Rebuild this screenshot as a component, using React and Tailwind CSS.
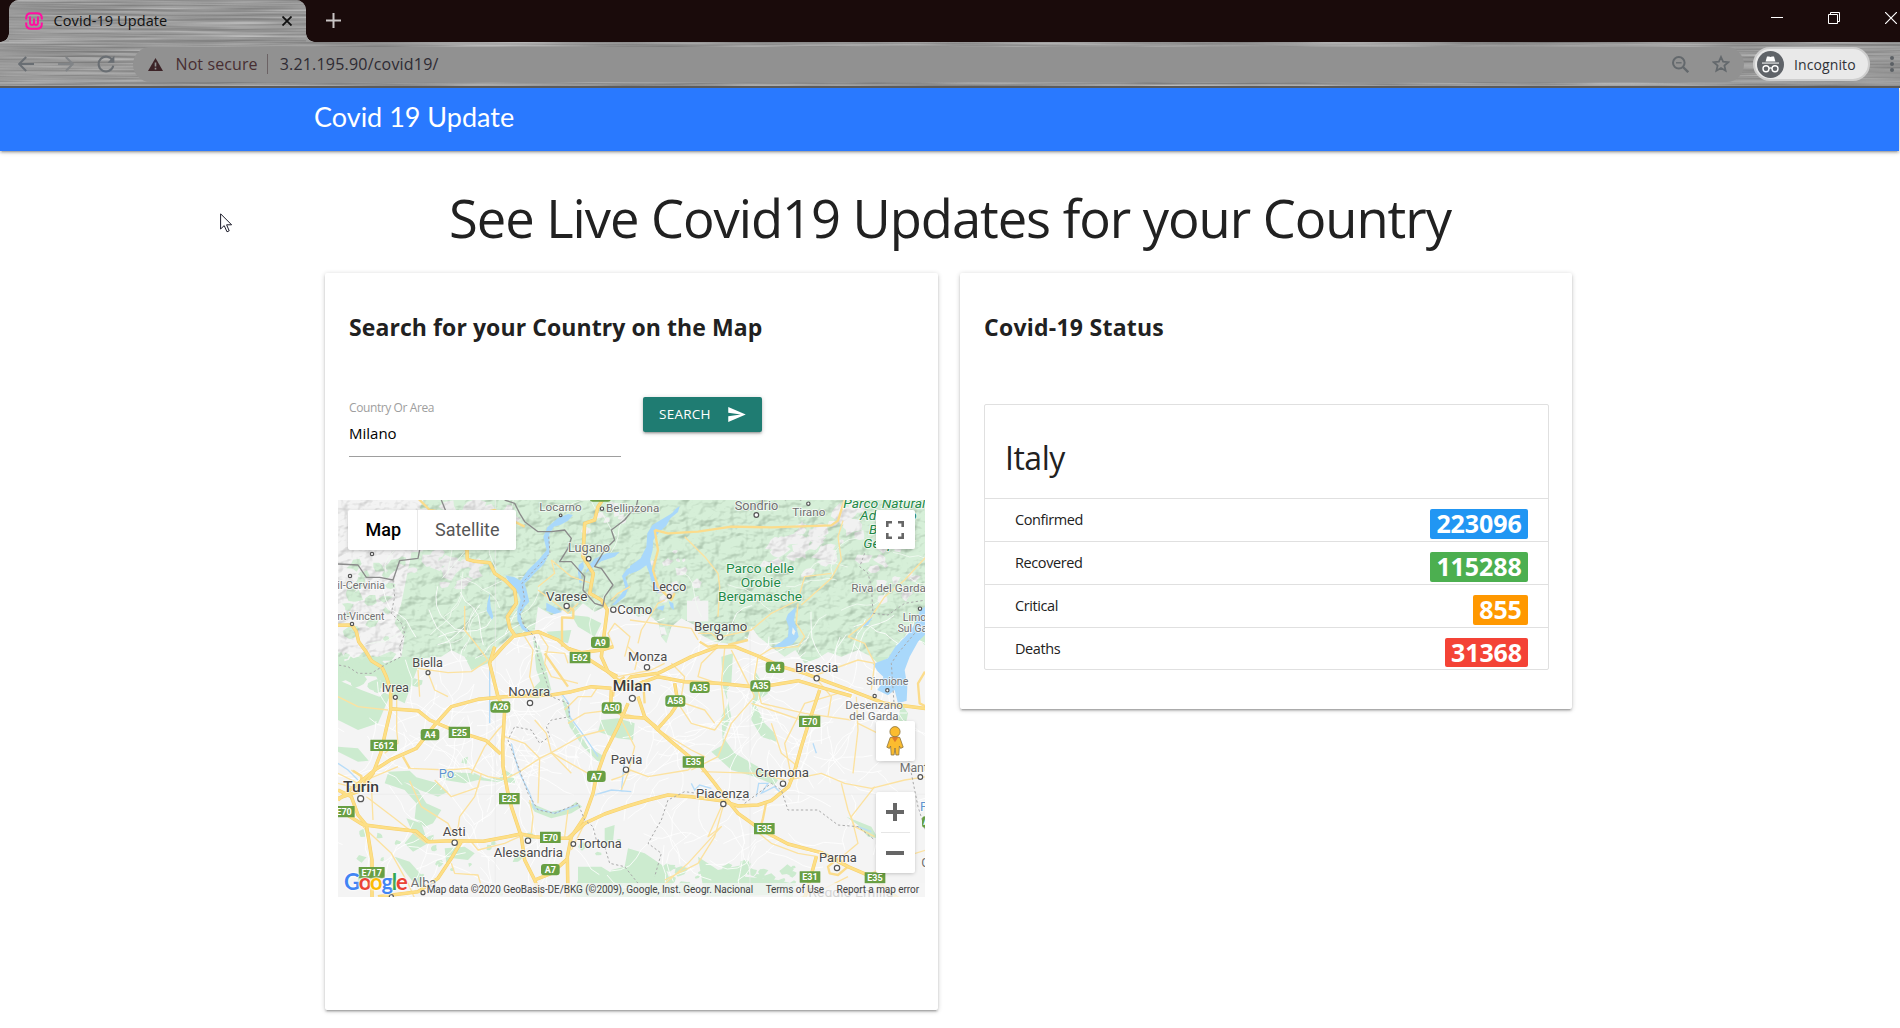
import React from "react";

const UI = "font-['Open_Sans',sans-serif]";

/* ---------- map data (three units per screen pixel) ---------- */

function rng(seed) {
  let s = seed;
  return () => {
    s = (s * 1664525 + 1013904223) % 4294967296;
    return s / 4294967296;
  };
}

function blob(r, x, y, size, skew) {
  const n = 6 + Math.floor(r() * 4);
  let d = "";
  for (let i = 0; i < n; i++) {
    const a = (i / n) * Math.PI * 2;
    const q = size * (0.45 + r() * 0.75);
    d += `${i ? "L" : "M"}${(x + Math.cos(a) * q * skew + Math.sin(a) * q * 0.3).toFixed(0)} ${(y + Math.sin(a) * q - Math.cos(a) * q * 0.4).toFixed(0)}`;
  }
  return d + "Z";
}

function blobs(seed, count, x0, y0, x1, y1, smin, smax, skew = 1.3) {
  const r = rng(seed);
  let d = "";
  for (let i = 0; i < count; i++) {
    d += blob(r, x0 + r() * (x1 - x0), y0 + r() * (y1 - y0), smin + r() * (smax - smin), skew);
  }
  return d;
}

function web(seed, count, x0, y0, x1, y1, step) {
  const r = rng(seed);
  let d = "";
  for (let i = 0; i < count; i++) {
    let x = x0 + r() * (x1 - x0);
    let y = y0 + r() * (y1 - y0);
    let a = r() * 6.28;
    d += `M${x.toFixed(0)} ${y.toFixed(0)}`;
    for (let k = 0; k < 6; k++) {
      a += (r() - 0.5) * 1.1;
      x += Math.cos(a) * step;
      y += Math.sin(a) * step;
      d += `L${x.toFixed(0)} ${y.toFixed(0)}`;
    }
  }
  return d;
}

const GREEN_NORTH =
  "M250 20 L1770 20 L1770 345 L1735 380 L1700 440 L1650 505 L1620 520 L1596 498 L1560 480 L1510 500 L1470 486 L1440 505 L1400 520 L1372 480 L1340 500 L1300 470 L1262 440 L1240 410 L1225 455 L1180 462 L1130 455 L1090 435 L1070 405 L1030 385 L1000 410 L985 460 L970 440 L962 400 L930 372 L900 380 L860 350 L800 350 L770 365 L735 340 L700 375 L675 360 L640 375 L600 350 L590 420 L560 440 L530 430 L500 455 L470 480 L450 520 L400 540 L380 500 L340 480 L310 500 L250 505 L225 570 L200 640 L160 620 L120 560 L60 555 L0 580 L0 520 L60 500 L100 490 L140 520 L190 500 L200 440 L170 400 L190 340 L160 290 L215 215 Z";

const GREENS = [
  "M0 570L70 600L150 630L120 700L60 720L0 690Z",
  "M0 770L60 775L92 812L60 815L0 785Z",
  "M150 845L215 842L235 862L300 880L330 905L300 920L245 900L210 880L165 870Z",
  "M150 850L240 900L265 940L310 960L285 1000L260 1010L230 985L235 940L200 900L140 880Z",
  "M310 845L410 850L440 865L535 862L530 878L470 875L420 870L380 880L320 870Z",
  "M375 805L390 800L386 822L370 818Z",
  "M205 985L250 1000L270 1060L225 1085L200 1060L225 1030Z",
  "M320 1075L380 1070L410 1090L390 1110L345 1105L325 1120Z",
  "M170 1100L215 1115L255 1160L240 1195L205 1150Z",
  "M570 935L640 965L690 955L715 935L732 950L700 970L640 985L590 965Z",
  "M670 615L690 650L700 690L750 770L800 800L790 825L735 770L695 710L680 660Z",
  "M790 690L840 685L890 700L885 750L840 745L780 725Z",
  "M1150 500L1185 490L1180 580L1165 610L1180 680L1155 740L1190 790L1260 830L1320 870L1310 885L1250 860L1180 840L1120 785L1155 765L1150 680L1170 640L1155 590Z",
  "M1250 540L1290 610L1250 640L1280 700L1310 730L1316 755L1270 740L1240 690L1245 620Z",
  "M1690 640L1710 670L1700 720L1680 690Z",
  "M1730 380L1765 350L1765 470L1725 430Z",
  "M1525 980L1600 1010L1620 1045L1590 1040L1560 1005Z",
  "M870 1075L920 1090L980 1130L1000 1180L1010 1225L850 1225L800 1180L820 1140L860 1130Z",
  "M720 1130L790 1130L870 1180L860 1225L700 1225L720 1170Z",
  "M1080 1100L1140 1140L1240 1120L1220 1160L1320 1170L1380 1185L1300 1215L1100 1220Z",
  "M800 1015L830 1005L825 1055L800 1070Z",
  "M500 840L535 860L520 880L480 870Z",
  "M560 620L590 590L620 560L640 600L600 625Z",
  "M585 440L605 470L625 540L640 600L620 610L595 540Z",
  "M625 425L700 420L690 460L650 450Z",
  "M700 375L750 380L790 400L770 440L720 410Z",
];

const LAKES = [
  "M705 75L690 92L668 104L648 110L634 132L634 190L618 222L590 250L572 270L560 280L568 310L574 335L560 350L548 372L552 400L570 420L590 425L575 432L552 418L538 390L538 358L548 330L540 308L520 290L502 256L530 262L548 272L570 240L606 205L626 180L616 140L628 112L660 84L690 72Z",
  "M455 310L448 340L446 362L462 390L466 380L458 350Z",
  "M625 338L648 350L672 366L650 372L625 362Z",
  "M845 186L806 190L770 206L752 228L742 250L760 236L790 214L830 200Z",
  "M735 215L722 225L720 250L725 280L732 276L728 250L738 230Z",
  "M900 222L866 238L852 258L862 292L850 312L822 346L832 344L862 318L872 292L862 262L876 250L900 242Z",
  "M1025 48L1012 58L1002 70L972 88L944 104L928 130L925 170L908 205L876 228L876 252L905 240L925 226L934 250L946 290L960 310L965 302L948 262L936 210L944 180L946 150L962 128L984 108L998 84L1020 66Z",
  "M960 350L980 346L975 362L958 356ZM992 334L1006 340L1008 360L998 352Z",
  "M1375 350L1350 372L1344 388L1352 410L1350 440L1330 455L1305 470L1340 472L1365 462L1382 440L1376 415L1368 390Z",
  "M1604 362L1596 380L1582 400L1572 412L1590 404L1602 384Z",
  "M1765 348L1746 360L1735 395L1712 430L1672 470L1650 505L1605 522L1620 545L1636 560L1628 585L1618 600L1650 616L1670 600L1680 640L1706 632L1708 590L1700 540L1715 500L1740 455L1765 430Z",
];

const MAJOR = [
  "M0 406L42 405L55 425L62 455L82 482L100 512L132 532L145 560L158 600L158 660L145 715L128 790L105 850L60 905L0 925",
  "M0 900L40 920L60 975L85 1005L102 1110L102 1225",
  "M20 970L75 1004L150 1014L235 1024L270 1055L340 1052L436 1054L500 1042L548 1032L590 1040L640 1045L690 1045L740 1000L800 972L870 948L930 930L990 915L1060 920L1150 932L1200 948L1260 945L1300 932L1352 890L1368 850L1390 770L1415 690L1445 600",
  "M0 930L110 840L160 808L235 775L290 705L340 650L420 628L500 620L640 615L700 605L760 590L820 595",
  "M158 656L240 662L275 690L350 722L445 752L488 792",
  "M470 470L455 520L470 580L480 620L500 660L494 760L495 830L508 900L520 950L540 1010L550 1040L560 1110L590 1170L610 1225",
  "M387 180L388 208L410 214L455 218L470 250L500 270L530 300L535 340L508 380L516 415L530 435L500 465L460 510",
  "M530 438L600 425L660 450L690 475L730 488L790 480L826 470",
  "M690 475L740 500L810 545L850 580",
  "M838 560L810 545L790 500L800 420L808 360L790 330L755 310L766 250L735 200L740 100L770 90L780 50L800 20",
  "M845 600L880 560L960 550L1060 500L1140 470L1190 470L1260 498L1330 530L1400 550L1480 580L1540 602L1640 640L1765 656",
  "M880 590L960 560L1040 575L1140 580L1260 592L1380 572L1440 590L1540 618",
  "M900 620L920 680L960 720L1000 755L1090 830L1130 880L1160 920L1200 970L1270 1020L1350 1062L1450 1088L1530 1130L1600 1160L1680 1225",
  "M870 640L840 710L800 790L775 860L765 910L740 980L700 1040L688 1100L690 1225",
  "M1435 1100L1400 1225",
  "M690 1105L640 1150L590 1170",
  "M370 1055L340 1105L300 1165L240 1205L120 1220",
  "M820 600L818 650L860 680L920 684L960 715L1000 670L1020 640L1010 580",
];

const MEDIUM = [
  "M950 120L960 180L945 240L960 290L1000 330L1010 310",
  "M950 120L990 130L1080 125L1180 110L1300 112L1480 106L1500 92L1510 60L1520 30",
  "M1285 935L1275 985L1268 1010",
  "M1761 545L1740 580L1745 640L1765 650",
  "M240 25L275 60L390 80L470 60L520 90L560 110",
  "M1470 1130L1500 1105L1530 1130L1500 1155L1475 1150Z",
  "M672 470L672 382L706 384L706 360L690 350",
  "M620 490L655 540L690 590",
  "M45 842L70 858L66 900M195 800L215 835",
  "M1085 455L1110 470L1140 465M1170 465L1230 450",
  "M915 570L920 640M860 560L830 580L825 620",
];

const MINOR = [
  "M240 535L330 548L400 545L450 510M270 548L290 600L330 620M240 540L245 620",
  "M380 348L380 420L420 470L450 510M560 440L585 480L575 560L590 600L570 620",
  "M215 835L330 840L390 835L450 860L500 868L545 845L605 805L640 788L700 850",
  "M500 740L560 760L605 805L600 940M640 788L730 738L800 720M640 788L625 730L590 690M640 788L750 850",
  "M400 850L440 770L480 720L500 700M215 872L250 950L330 1000L350 1040",
  "M290 870L340 920L420 892L430 850M425 870L410 920L365 980L358 1030",
  "M85 920L170 985L265 1060M75 1010L160 1090L210 1180L230 1225",
  "M580 1030L585 980L575 930M690 960L680 1040M400 1055L420 1080L500 1060L545 1040",
  "M340 1120L350 1150L420 1155L440 1225M690 700L740 670L820 660L890 680",
  "M840 560L940 540L980 520M620 485L680 490L690 520M600 425L630 470L620 520L640 560L720 580",
  "M826 470L810 430L830 400L876 440L860 500M760 280L700 260L640 210",
  "M600 300L640 330L690 370L720 340M640 210L650 250L600 290",
  "M876 290L840 310L820 330M900 460L910 420L960 340L980 330M876 390L1060 415L1080 450",
  "M1140 450L1120 430L1080 430M1150 440L1240 420L1300 370L1380 330L1400 260L1480 250",
  "M1140 380L1145 290L1140 250L1100 200L1040 140M1390 345L1480 265L1510 210L1500 140L1515 92",
  "M1530 440L1575 405L1600 380L1640 320L1700 270L1765 200M1530 440L1580 460L1610 520L1600 600",
  "M1380 340L1375 400L1400 440L1380 470L1300 475L1260 500M1435 555L1560 510L1610 520",
  "M1140 470L1090 520L1080 560L1140 580M1160 475L1150 580L1160 680L1130 720L1060 700L1020 640",
  "M1180 480L1220 560L1250 620L1180 700L1140 800L1060 840",
  "M1260 500L1250 560L1270 640L1400 670L1540 690M1430 560L1480 620L1470 680",
  "M960 720L1060 780L1100 800L1050 840L930 860L876 840M1090 845L1260 850L1340 870",
  "M1350 870L1450 850L1520 880L1600 895L1700 870L1765 860M1510 880L1530 960L1550 1010L1610 1040",
  "M1610 890L1540 980L1560 1060L1500 1110M1555 620L1560 720L1545 850M1700 700L1640 740L1560 700",
  "M1155 950L1130 1040L1080 1120L980 1170M1150 950L1110 1040L1150 1010L1050 1120L960 1200",
  "M1250 1020L1300 1060L1380 1090L1440 1100M1530 1160L1450 1200L1380 1225M1420 700L1300 660L1240 640",
  "M0 620L60 650L150 660M176 620L176 720L180 760L140 790M40 840L100 880L105 990",
  "M0 850L60 880L180 830M0 880L80 900M740 1000L700 1080M850 690L890 770L870 850L850 900",
  "M820 870L850 860L880 840M780 590L760 620L720 620L680 660M1600 1150L1700 1100L1765 1080",
  "M1380 830L1330 790L1300 700M1500 610L1400 640L1340 760L1360 860M230 90L300 110L380 180",
  "M890 540L900 500L870 470M1000 520L1040 560L1030 620M1040 640L1100 660L1130 700",
];

const BORDERS = [
  "M500 30L530 40L545 70L560 95L600 125L640 125L680 120L700 145L690 175L665 215L700 215L740 260L735 300L770 340L795 348L800 320L825 285L790 235L770 230L800 180L830 150L820 120L860 90L876 70L895 50L900 25",
  "M310 30L330 80M0 222L60 225L85 262L125 262L165 270L185 212L240 205L245 180M1340 30L1360 20L1390 30",
];

const DASHED = [
  "M165 270L170 320L160 370L190 400L200 430L185 470L190 500L140 525L100 550L60 550L30 530L0 525",
  "M632 140L636 190L552 280L560 330L545 370L560 410L590 440L600 500L620 560L640 620L690 640L695 680L640 690L625 710L635 740L605 760L580 720L530 710L510 750L525 790L545 840L570 910L600 960L650 970L720 940L740 990L765 1010L775 1050L800 1070L815 1120L860 1130L900 1180",
  "M1580 190L1565 230L1590 250L1600 290L1605 370L1650 375L1700 340L1765 330",
  "M1220 940L1300 880L1330 900L1350 960L1440 960L1500 1005L1560 1010L1610 1050",
  "M1220 930L1150 920L1040 905L990 930L970 990L930 1060L970 1090L950 1160",
  "M1728 740L1710 800L1740 950L1765 1030",
  "M1730 430L1680 490L1660 520L1668 640",
];

const L = [
  // text, x0, x1, baseline, size, kind
  ["Locarno", 604, 731, 62, 34, "g"], ["Bellinzona", 804, 964, 66, 32, "g"],
  ["il-Cervinia", -2, 141, 296, 31, "g"], ["nt-Vincent", -2, 139, 389, 31, "g"],
  ["Lugano", 690, 816, 187, 36, "g"], ["Varese", 624, 748, 332, 38, "d"],
  ["Como", 838, 943, 372, 38, "d"], ["Biella", 223, 315, 530, 37, "d"],
  ["Ivrea", 131, 213, 605, 36, "d"], ["Novara", 511, 637, 619, 38, "d"],
  ["Milan", 824, 940, 604, 46, "b"], ["Sondrio", 1190, 1321, 59, 37, "g"],
  ["Tirano", 1363, 1462, 79, 34, "g"], ["Parco delle", 1164, 1368, 249, 40, "p"],
  ["Orobie", 1208, 1328, 290, 40, "p"], ["Bergamasche", 1140, 1392, 332, 40, "p"],
  ["Parco Natural", 1516, 1762, 53, 38, "i"], ["Adamello", 1566, 1736, 91, 38, "i"],
  ["Brenta", 1593, 1710, 133, 38, "i"], ["Geopark", 1576, 1728, 175, 38, "i"],
  ["Riva del Garda", 1540, 1764, 306, 34, "g"], ["Limone", 1694, 1800, 393, 32, "g"],
  ["Sul Garda", 1679, 1812, 426, 32, "g"], ["Lecco", 943, 1045, 304, 36, "d"],
  ["Bergamo", 1068, 1228, 424, 39, "d"], ["Monza", 870, 988, 513, 38, "d"],
  ["Brescia", 1371, 1501, 545, 39, "d"], ["Sirmione", 1585, 1711, 584, 33, "g"],
  ["Turin", 15, 123, 905, 46, "b"], ["Po", 302, 348, 863, 40, "w"],
  ["Asti", 314, 383, 1038, 39, "d"], ["Alessandria", 467, 675, 1100, 39, "d"],
  ["Tortona", 718, 851, 1073, 37, "d"], ["Alba", 218, 295, 1192, 37, "g"],
  ["Pavia", 818, 913, 822, 39, "d"], ["Desenzano", 1522, 1695, 657, 35, "g"],
  ["del Garda", 1534, 1682, 691, 35, "g"], ["Cremona", 1252, 1413, 862, 39, "d"],
  ["Piacenza", 1074, 1234, 925, 39, "d"], ["Parma", 1443, 1556, 1116, 39, "d"],
  ["Mantua", 1685, 1810, 846, 37, "g"], ["Po", 1746, 1792, 962, 40, "w"],
  ["Carpi", 1750, 1840, 1130, 37, "g"], ["Reggio Emilia", 1411, 1666, 1222, 38, "g"],
];

const LABEL_STYLE = {
  g: { fill: "#707070", weight: 400 },
  d: { fill: "#4b4b4b", weight: 400 },
  b: { fill: "#3c3c3c", weight: 500 },
  p: { fill: "#1e8a47", weight: 400 },
  i: { fill: "#1e8a47", weight: 400, italic: true },
  w: { fill: "#5f94cf", weight: 400 },
};

const DOTS = [
  [668, 76, 4], [792, 56, 5], [102, 192, 5], [36, 258, 5], [42, 402, 5], [752, 206, 7], [686, 348, 8],
  [826, 359, 8], [270, 548, 6], [172, 622, 6], [883, 625, 9], [576, 639, 8], [68, 926, 9], [350, 1058, 8],
  [570, 1052, 8], [706, 1062, 7], [864, 839, 8], [255, 1208, 6], [160, 1220, 6], [1255, 75, 7], [1411, 41, 5],
  [994, 319, 6], [1146, 442, 8], [927, 532, 8], [1436, 565, 8], [1648, 601, 5], [1610, 618, 5], [1746, 356, 5],
  [1335, 881, 8], [1156, 942, 8], [1497, 1134, 8], [1747, 861, 7],
];

const SHIELDS = [
  ["A9", 787, 457, 56], ["E62", 726, 503, 62], ["A9", 787, 18, 64], ["A4", 1311, 532, 56],
  ["A35", 1085, 592, 60], ["A35", 1267, 588, 60], ["A26", 487, 651, 60], ["E25", 364, 727, 64],
  ["A4", 276, 734, 56], ["E612", 137, 766, 80], ["A50", 821, 654, 60], ["A7", 775, 859, 56],
  ["E25", 514, 926, 62], ["E70", 18, 965, 64], ["E70", 637, 1042, 62], ["A7", 637, 1139, 56],
  ["E717", 101, 1148, 78], ["A58", 1012, 633, 60], ["E70", 1415, 694, 64], ["E35", 1066, 816, 64],
  ["E35", 1279, 1016, 62], ["E31", 1416, 1161, 62], ["E35", 1611, 1164, 62], ["A22", 1780, 996, 56],
];

function MapCanvas() {
  return (
    <svg className="block h-full w-full" viewBox="0 30 1761 1191" preserveAspectRatio="none">
      <defs>
        <filter id="relief" x="0" y="0" width="100%" height="100%" colorInterpolationFilters="sRGB">
          <feTurbulence type="fractalNoise" baseFrequency="0.022 0.03" numOctaves="3" seed="7" />
          <feDiffuseLighting surfaceScale="16" diffuseConstant="1.18" lightingColor="#ffffff">
            <feDistantLight azimuth="225" elevation="58" />
          </feDiffuseLighting>
        </filter>
        <clipPath id="hills">
          <path d={GREEN_NORTH} />
          <path d="M0 20H260L215 215L190 340L200 440L190 500L0 520Z" />
        </clipPath>
      </defs>
      <rect x="0" y="20" width="1761" height="1210" fill="#f4f4f4" />
      <path d={GREEN_NORTH} fill="#ccebcf" />
      {GREENS.map((d) => <path key={d} d={d} fill="#ccebcf" />)}
      <path d={blobs(3, 26, 0, 430, 240, 640, 6, 26)} fill="#ccebcf" />
      <path d={blobs(5, 26, 60, 1010, 860, 1210, 4, 14)} fill="#ccebcf" />
      <path d={blobs(15, 34, 940, 1120, 1400, 1215, 5, 20)} fill="#ccebcf" />
      <g clipPath="url(#hills)">
        <path d="M0 20H260L230 90L215 215L190 340L150 400L190 470L120 500L0 480Z" fill="#f3f3f3" />
        <path d={blobs(11, 20, 0, 200, 200, 520, 8, 22)} fill="#d2edd4" />
        <path d={blobs(21, 22, 190, 150, 420, 290, 8, 24, 1.6)} fill="#eeeeee" />
        <path d={blobs(23, 16, 240, 40, 520, 130, 8, 24, 1.6)} fill="#eeeeee" />
        <path d={blobs(29, 8, 700, 40, 860, 130, 6, 14, 1.4)} fill="#f1f1f1" />
        <path d={blobs(31, 16, 1280, 140, 1480, 250, 8, 24, 1.5)} fill="#f1f1f1" />
        <path d={blobs(37, 26, 1360, 40, 1700, 220, 8, 24, 1.5)} fill="#f1f1f1" />
        <path d={blobs(41, 12, 940, 180, 1080, 330, 6, 18, 1.2)} fill="#f1f1f1" />
        <path d={blobs(43, 10, 1600, 200, 1761, 330, 6, 18, 1.3)} fill="#f1f1f1" />
        <path d={blobs(47, 14, 600, 380, 1000, 470, 6, 18)} fill="#f4f4f4" />
        <rect x="0" y="20" width="1761" height="480" filter="url(#relief)" className="opacity-20 mix-blend-multiply" />
      </g>
      <rect x="1047" y="332" width="64" height="62" fill="#f2f2f2" />
      <path d={web(51, 70, 200, 420, 1000, 900, 30)} fill="none" stroke="#ffffff" strokeWidth="2.5" />
      <path d={web(53, 120, 0, 650, 1761, 1210, 30)} fill="none" stroke="#ffffff" strokeWidth="2.5" />
      <path d={web(57, 60, 980, 430, 1700, 800, 26)} fill="none" stroke="#ffffff" strokeWidth="2.5" />
      <path d={web(59, 26, 200, 60, 1761, 420, 26)} fill="none" stroke="#f2faf2" strokeWidth="2.5" />
      <path d="M0 820L30 840L60 870M670 610L692 640L695 680L740 740L780 800M520 760L530 800L545 850L575 910L590 955L650 970L720 945M860 805L850 905M770 915L820 900L880 905M1255 920L1262 880L1290 880L1270 910L1310 890L1325 905M1060 880L1070 900L1085 885L1120 895M1600 1025L1560 1010M455 500L455 700M1425 760L1435 790" fill="none" stroke="#b7dcf8" strokeWidth="4" />
      {LAKES.map((d) => <path key={d} d={d} fill="#a9d8fb" />)}
      <path d="M1364 412L1372 424L1368 436L1362 430Z" fill="#eef4ee" />
      <path d="M0 913H1761M472 30V1225M1236 420V1225" stroke="#ececec" strokeWidth="2" />
      {MINOR.map((d) => <path key={d} d={d} fill="none" stroke="#fce2a0" strokeWidth="4" strokeLinejoin="round" />)}
      {MEDIUM.map((d) => <path key={d} d={d} fill="none" stroke="#fbdc8c" strokeWidth="7" strokeLinejoin="round" />)}
      {MAJOR.map((d) => <path key={d} d={d} fill="none" stroke="#f6cf6c" strokeWidth="10.5" strokeLinejoin="round" />)}
      {MAJOR.map((d) => <path key={d} d={d} fill="none" stroke="#fddf86" strokeWidth="7.5" strokeLinejoin="round" />)}
      {BORDERS.map((d) => <path key={d} d={d} fill="none" stroke="#8b8b8b" strokeWidth="4" strokeLinejoin="round" />)}
      {DASHED.map((d) => <path key={d} d={d} fill="none" stroke="#a9a9a9" strokeWidth="3" strokeDasharray="7 7" />)}
      {DOTS.map(([x, y, r]) => (
        <circle key={`${x}-${y}`} cx={x} cy={y} r={r} fill="#ffffff" stroke="#555555" strokeWidth="3.6" />
      ))}
      {SHIELDS.map(([t, x, y, w], i) => (
        <g key={i}>
          <rect x={x - w / 2} y={y - 17} width={w} height="34" rx={t[0] === "A" ? 9 : 1} fill="#689f43" />
          <text x={x} y={y + 10} textAnchor="middle" fontSize="27" fontWeight="700" fill="#ffffff" className="font-['Roboto',sans-serif]">{t}</text>
        </g>
      ))}
      {L.map(([t, x0, x1, y, s, k], i) => (
        <text
          key={i}
          x={x0}
          y={y}
          textLength={x1 - x0}
          lengthAdjust="spacingAndGlyphs"
          fontSize={s}
          fontWeight={LABEL_STYLE[k].weight}
          fontStyle={LABEL_STYLE[k].italic ? "italic" : "normal"}
          fill={LABEL_STYLE[k].fill}
          stroke="#ffffff"
          strokeWidth="5"
          strokeOpacity="0.75"
          paintOrder="stroke"
          className="font-['Roboto',sans-serif]"
        >
          {t}
        </text>
      ))}
    </svg>
  );
}

function Pegman() {
  return (
    <svg className="h-[30px] w-[18px]" viewBox="0 0 18 30">
      <path d="M4.2 11.5Q9 9.6 13.8 11.5L17.2 21.2L14.6 22.4L13.4 20L12.8 29H9.9L9 22L8.1 29H5.2L4.6 20L3.4 22.4L0.8 21.2Z" fill="#fbbc2f" stroke="#8a7440" strokeWidth="0.8" />
      <path d="M5.6 11H12.4L9 16.2Z" fill="#e07b2a" />
      <circle cx="9" cy="5.7" r="5.1" fill="#fbbc2f" stroke="#8a7440" strokeWidth="0.8" />
    </svg>
  );
}

function GoogleLogo() {
  return (
    <div className="absolute bottom-[1px] left-[6px] flex text-[22px] leading-[28px] font-bold tracking-[-1.3px] font-['Lato',sans-serif] [text-shadow:0_0_2px_#fff,0_0_2px_#fff,0_0_3px_#fff]">
      <span className="text-[#4285f4]">G</span>
      <span className="text-[#ea4335]">o</span>
      <span className="text-[#fbbc05]">o</span>
      <span className="text-[#4285f4]">g</span>
      <span className="text-[#34a853]">l</span>
      <span className="text-[#ea4335]">e</span>
    </div>
  );
}

const CONTROL = "rounded-[2px] bg-white shadow-[0_1px_4px_-1px_rgba(0,0,0,0.3)]";

function MapPanel() {
  return (
    <div className="relative ml-[13px] h-[397px] w-[587px] overflow-hidden">
      <MapCanvas />
      <div className={`absolute top-[10px] left-[10px] flex h-10 text-[18px] leading-[39px] font-['Roboto',sans-serif] ${CONTROL}`}>
        <div className="w-[70px] border-r border-[#e9e9e9] pl-[17.5px] font-medium text-black">Map</div>
        <div className="w-[98px] pl-[17px] text-[#565656]">Satellite</div>
      </div>
      <div className={`absolute top-[10px] right-[10px] grid h-[39px] w-[39px] place-items-center pr-px ${CONTROL}`}>
        <svg className="h-[18px] w-[18px]" viewBox="0 0 18 18" fill="none" stroke="#666666" strokeWidth="2.6">
          <path d="M1.3 6V1.3H6M12 1.3H16.7V6M16.7 12V16.7H12M6 16.7H1.3V12" />
        </svg>
      </div>
      <div className={`absolute right-[10px] bottom-[136px] grid h-10 w-[39px] place-items-center pr-px ${CONTROL}`}>
        <Pegman />
      </div>
      <div className={`absolute right-[10px] bottom-[24px] flex h-[81px] w-[39px] flex-col items-center pr-px ${CONTROL}`}>
        <svg className="mt-[11px] h-[18px] w-[18px]" viewBox="0 0 18 18" fill="#666666"><path d="M7 0H11V7H18V11H11V18H7V11H0V7H7Z" /></svg>
        <div className="mt-[11px] h-px w-[29px] bg-[#e6e6e6]" />
        <div className="mt-[18px] h-1 w-[18px] bg-[#666666]" />
      </div>
      <GoogleLogo />
      <div className="absolute right-0 bottom-0 flex h-[14px] gap-[12.5px] bg-[#f5f5f5]/75 pr-[6px] pl-[1px] text-[10px] leading-[13px] tracking-[-0.06px] whitespace-nowrap text-[#444444] font-['Roboto',sans-serif]">
        <span>Map data ©2020 GeoBasis-DE/BKG (©2009), Google, Inst. Geogr. Nacional</span>
        <span>Terms of Use</span>
        <span>Report a map error</span>
      </div>
    </div>
  );
}

function Metal() {
  return (
    <svg className="absolute inset-0 h-full w-full" aria-hidden="true">
      <filter id="brushed" x="0" y="0" width="100%" height="100%" colorInterpolationFilters="sRGB">
        <feTurbulence type="fractalNoise" baseFrequency="0.007 0.42" numOctaves="3" seed="4" />
        <feColorMatrix values="0.36 0 0 0 0.42  0.36 0 0 0 0.42  0.36 0 0 0 0.42  0 0 0 0 1" />
      </filter>
      <rect width="100%" height="100%" filter="url(#brushed)" />
    </svg>
  );
}

function TabStrip() {
  return (
    <div className="relative flex h-[42px] items-start bg-[#1a0b0b]">
      <div className="relative ml-[9px] h-[42px] w-[297px]">
        <div className="absolute inset-0 overflow-hidden rounded-t-[10px] bg-[#a0a0a0]"><Metal /></div>
        <div className="absolute bottom-0 -left-[9px] h-[9px] w-[9px] bg-[radial-gradient(circle_at_0_0,#1a0b0b_8.5px,#9b9b9b_9px)]" />
        <div className="absolute -right-[9px] bottom-0 h-[9px] w-[9px] bg-[radial-gradient(circle_at_100%_0,#1a0b0b_8.5px,#9b9b9b_9px)]" />
        <div className="relative flex h-[42px] items-center">
          <svg className="ml-4 h-[18px] w-[18px]" viewBox="0 0 18 18" fill="none" stroke="#ff10a0" strokeWidth="2">
            <path d="M1.2 7.6V6Q1.2 1.2 6 1.2H12Q16.8 1.2 16.8 6V7.6M1.2 10.4V12Q1.2 16.8 6 16.8H12Q16.8 16.8 16.8 12V10.4" />
            <path d="M5 4.6V10.5Q5 13 7 13T9 10.5V6.5V10.5Q9 13 11 13T13 10.5V4.6" strokeWidth="1.9" />
          </svg>
          <span className="-mt-[1px] ml-[10.5px] text-[14.5px] tracking-[0.1px] text-[#111111]">Covid-19 Update</span>
          <svg className="absolute top-[16px] left-[273px] h-[10px] w-[10px]" viewBox="0 0 10 10" stroke="#111111" strokeWidth="1.8"><path d="M0.5 0.5L9.5 9.5M9.5 0.5L0.5 9.5" /></svg>
        </div>
      </div>
      <svg className="mt-[13px] ml-[20px] h-[15px] w-[15px]" viewBox="0 0 15 15" stroke="#c9c5c5" strokeWidth="2"><path d="M7.5 0V15M0 7.5H15" /></svg>
      <div className="mt-[12px] mr-[3px] ml-auto flex gap-[45px] text-white">
        <svg className="h-3 w-3" viewBox="0 0 12 12" stroke="currentColor"><path d="M0 5.5H12" /></svg>
        <svg className="h-3 w-3" viewBox="0 0 12 12" fill="none" stroke="currentColor"><path d="M0.5 2.5H9.5V11.5H0.5ZM2.5 2.5V0.5H11.5V9.5H9.5" /></svg>
        <svg className="h-3 w-3" viewBox="0 0 12 12" stroke="currentColor" strokeWidth="1.2"><path d="M0 0L12 12M12 0L0 12" /></svg>
      </div>
    </div>
  );
}

function Toolbar() {
  return (
    <div className="relative h-[46px] border-b-2 border-[#5b5b5b] bg-[#969696]">
      <Metal />
      <div className="relative flex h-[44px] items-center">
        <svg className="ml-[18px] h-4 w-4" viewBox="0 0 16 16" fill="none" stroke="#696e73" strokeWidth="2"><path d="M16 8H1.5M8.2 1L1.2 8L8.2 15" /></svg>
        <svg className="ml-[24px] h-4 w-4" viewBox="0 0 16 16" fill="none" stroke="#818487" strokeWidth="2"><path d="M0 8H14.5M7.8 1L14.8 8L7.8 15" /></svg>
        <svg className="ml-[23px] h-[18px] w-[18px]" viewBox="0 0 18 18" fill="none" stroke="#696e73" strokeWidth="2.1"><path d="M15.6 5.6A7.4 7.4 0 1 0 16.3 10.6" /><path d="M17.4 0.8V7.8H10.4Z" fill="#696e73" stroke="none" /></svg>
        <div className="ml-[18px] flex h-[35px] w-[1611px] items-center rounded-full bg-[#919191]">
          <svg className="ml-[15px] h-[13px] w-[15px]" viewBox="0 0 15 13"><path d="M7.5 0L15 13H0Z" fill="#3c2327" /><path d="M6.7 4.5H8.3V8.6H6.7ZM6.7 9.8H8.3V11.4H6.7Z" fill="#919191" /></svg>
          <span className="ml-[12.5px] text-[16px] tracking-[0.1px] text-[#472e31]">Not secure</span>
          <div className="ml-[9px] h-[20px] w-px bg-[#6b6264]" />
          <span className="ml-[12px] text-[16px] tracking-[0.2px] text-[#2e2b33]">3.21.195.90/covid19/</span>
          <svg className="mr-[23px] ml-auto h-[17px] w-[17px]" viewBox="0 0 17 17" fill="none" stroke="#63686c" strokeWidth="2"><circle cx="6.8" cy="6.8" r="5.8" /><path d="M11 11L16.2 16.2" strokeWidth="2.4" /><path d="M4 6.8H9.6" strokeWidth="1.3" /></svg>
          <svg className="mr-[14px] h-[18px] w-[18px]" viewBox="0 0 18 18" fill="none" stroke="#63686c" strokeWidth="1.8"><path d="M9 2L11.1 6.7L16.3 7.2L12.4 10.6L13.6 15.7L9 13L4.4 15.7L5.6 10.6L1.7 7.2L6.9 6.7Z" /></svg>
        </div>
        <div className="ml-[9px] flex h-[34px] w-[117px] items-center rounded-full border-2 border-[#cdcdcd] bg-[#e9e9e9]">
          <svg className="ml-[2px] h-[27px] w-[27px]" viewBox="0 0 27 27">
            <circle cx="13.5" cy="13.5" r="13.5" fill="#5f6368" />
            <path d="M8.6 10.5L10 5.4H12L13.5 6L15 5.4H17L18.4 10.5Z" fill="#ffffff" />
            <path d="M5 11.2H22V13H5Z" fill="#b9bbbd" />
            <g fill="none" stroke="#ffffff" strokeWidth="1.4"><circle cx="9" cy="17.8" r="3" /><circle cx="18" cy="17.8" r="3" /><path d="M12 17.3Q13.5 16.5 15 17.3" /></g>
          </svg>
          <span className="ml-[10px] text-[14px] tracking-[0.1px] text-[#2f3238]">Incognito</span>
        </div>
        <div className="ml-[20px] flex flex-col gap-[2px]">
          <div className="h-1 w-1 rounded-full bg-[#5b6065]" />
          <div className="h-1 w-1 rounded-full bg-[#5b6065]" />
          <div className="h-1 w-1 rounded-full bg-[#5b6065]" />
        </div>
      </div>
    </div>
  );
}

const RAISED = "rounded-[2px] shadow-[0_2px_2px_0_rgba(0,0,0,0.14),0_3px_1px_-2px_rgba(0,0,0,0.12),0_1px_5px_0_rgba(0,0,0,0.2)]";

function SearchCard() {
  return (
    <section className={`h-[737px] w-[613px] bg-white ${RAISED}`}>
      <h2 className="pt-[36px] pb-px pl-[24px] text-[23px] leading-[36px] font-bold tracking-[0.08px]">Search for your Country on the Map</h2>
      <div className="mt-[51px] flex h-[103px] pl-[24px]">
        <div className="h-[60px] w-[272px] border-b border-[#9e9e9e]">
          <div className="pt-[3px] text-[12px] leading-[16px] tracking-[-0.4px] text-[#9e9e9e]">Country Or Area</div>
          <div className="mt-[7px] text-[15px] leading-[20px] text-black">Milano</div>
        </div>
        <button className={`ml-[22px] flex h-[35px] w-[119px] items-center bg-[#1f7c72] pl-4 text-[13.5px] text-white ${RAISED}`}>
          <span className="tracking-[0.25px]">SEARCH</span>
          <svg className="ml-[17px] h-[15px] w-[18px]" viewBox="2 3 21 18" fill="#ffffff"><path d="M2.01 21L23 12 2.01 3 2 10l15 2-15 2z" /></svg>
        </button>
      </div>
      <MapPanel />
    </section>
  );
}

const ROWS = [
  { label: "Confirmed", value: "223096", badge: "bg-[#2196f3] w-[98px] h-[30px]", row: "h-[43px]" },
  { label: "Recovered", value: "115288", badge: "bg-[#4caf50] w-[98px] h-[30px]", row: "h-[43px]" },
  { label: "Critical", value: "855", badge: "bg-[#ff9800] w-[55px] h-[30px]", row: "h-[43px]" },
  { label: "Deaths", value: "31368", badge: "bg-[#f44336] w-[83px] h-[29px]", row: "h-[42px]" },
];

function StatusCard() {
  return (
    <section className={`h-[436px] w-[612px] bg-white ${RAISED}`}>
      <h2 className="pt-[36px] pb-px pl-[24px] text-[23px] leading-[36px] font-bold tracking-[0.25px]">Covid-19 Status</h2>
      <div className="mt-[58px] ml-[24px] w-[565px] rounded-[2px] border border-[#e0e0e0]">
        <div className="h-[93px] pt-[33px] pl-[20px] text-[32px] leading-[40px] tracking-[-0.5px]">Italy</div>
        {ROWS.map((r) => (
          <div key={r.label} className={`flex justify-between border-t border-[#e0e0e0] pr-[20px] pl-[30px] ${r.row}`}>
            <span className="mt-[10px] text-[14.5px] leading-[22px] tracking-[-0.4px]">{r.label}</span>
            <span className={`mt-[10px] flex items-center justify-center rounded-[2px] pb-[2px] text-[25px] leading-[28px] font-bold tracking-[-0.1px] text-white ${r.badge}`}>{r.value}</span>
          </div>
        ))}
      </div>
    </section>
  );
}

export default function App() {
  return (
    <div className={`relative h-[1028px] w-[1900px] overflow-hidden bg-white text-[#212121] ${UI}`}>
      <TabStrip />
      <Toolbar />
      <nav className="mr-px h-[63px] bg-[#2979ff] pt-[6px] pl-[314px] text-[27px] leading-[46px] text-white shadow-[0_2px_2px_0_rgba(0,0,0,0.14),0_3px_1px_-2px_rgba(0,0,0,0.12),0_1px_5px_0_rgba(0,0,0,0.2)] font-['Lato',sans-serif]">
        Covid 19 Update
      </nav>
      <main>
        <h1 className="mt-[29px] h-[92px] text-center text-[52.5px] leading-[76px] tracking-[-1.05px] whitespace-nowrap">See Live Covid19 Updates for your Country</h1>
        <div className="mt-px ml-[325px] flex items-start gap-[22px]">
          <SearchCard />
          <StatusCard />
        </div>
      </main>
      <svg className="absolute top-[213px] left-[220px] h-[20px] w-[13px]" viewBox="0 0 13 20"><path d="M0.6 0.8V16L4.2 12.6L7 18.8L9.2 17.8L6.6 11.8H11.6Z" fill="#ffffff" stroke="#1c1c2a" strokeWidth="1" /></svg>
    </div>
  );
}
